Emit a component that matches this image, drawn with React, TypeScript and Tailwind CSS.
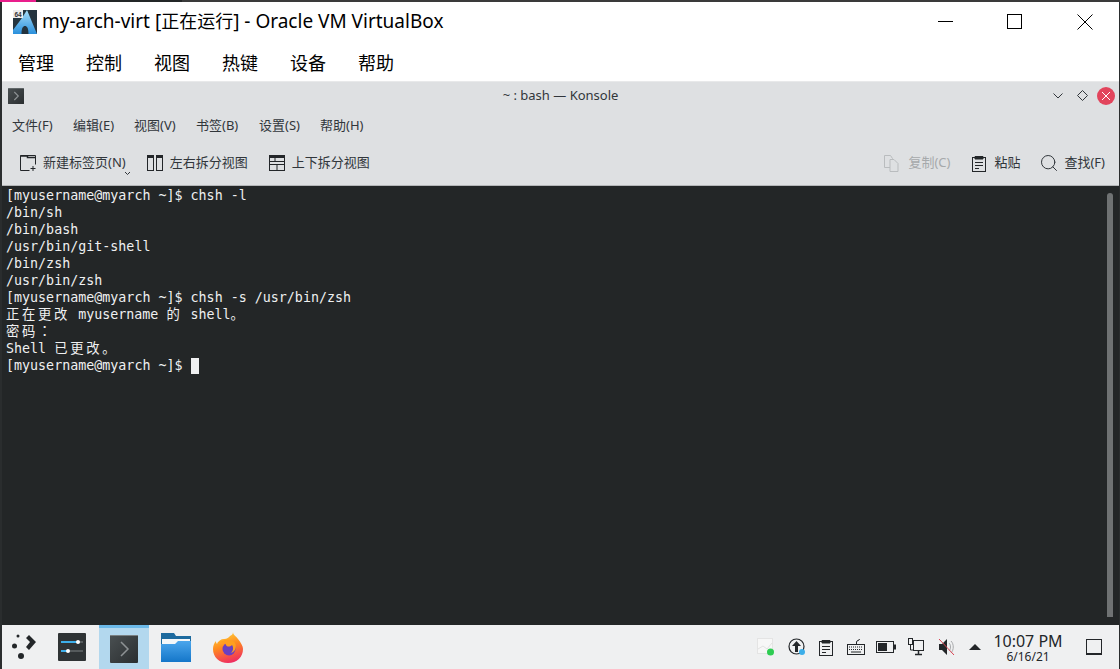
import { Search } from 'lucide-react'

const uiFont = '"Noto Sans", "Noto Sans CJK SC", sans-serif'

function Cn({ children }: { children: string }) {
  return <span className="font-['Noto_Sans_CJK_SC',sans-serif] leading-[0px] tracking-[2.7px]">{children}</span>
}

function TermLine({ children }: { children: React.ReactNode }) {
  return <div className="h-[17px] leading-[17px] whitespace-pre">{children}</div>
}

function ArchIcon() {
  return (
    <svg width="24" height="24" viewBox="0 0 24 24" className="shrink-0">
      <defs>
        <linearGradient id="arch" x1="0" y1="0" x2="0" y2="1">
          <stop offset="0" stopColor="#a8defa" />
          <stop offset="1" stopColor="#2a90dc" />
        </linearGradient>
      </defs>
      <rect width="24" height="24" fill="#24343f" />
      <path d="M14 0 L24 24 L15.5 24 C15.5 18 14 16 12 16 C10 16 8.5 18 8.5 24 L0 24 L0 20 L9 8 Z" fill="url(#arch)" />
      <rect width="10" height="8" fill="#ececec" />
      <text x="1.5" y="6.5" fontSize="6.5" fontWeight="700" fill="#333" fontFamily="Liberation Sans">64</text>
    </svg>
  )
}

function NewTabIcon() {
  return (
    <svg width="16" height="16" viewBox="0 0 16 16" fill="none" stroke="#232629" className="shrink-0">
      <path d="M.5 .5h15v9M.5 .5v15h9" />
      <path d="M.5 1h7v1.5h8" strokeWidth="1.5" />
      <path d="M13 11v5M10.5 13.5h5" />
    </svg>
  )
}

function SplitVIcon() {
  return (
    <svg width="16" height="16" viewBox="0 0 16 16" fill="none" stroke="#232629" className="shrink-0">
      <rect x=".5" y=".5" width="6" height="15" />
      <rect x="9.5" y=".5" width="6" height="15" />
      <path d="M0 1.5h7M9 1.5h7" strokeWidth="3" />
    </svg>
  )
}

function SplitHIcon() {
  return (
    <svg width="16" height="16" viewBox="0 0 16 16" fill="none" stroke="#232629" className="shrink-0">
      <rect x=".5" y=".5" width="15" height="15" />
      <path d="M0 1.5h16" strokeWidth="3" />
      <path d="M0 6.5h16M0 9.5h16M8 9.5v6M6 3v3.5" />
    </svg>
  )
}

function CopyIcon() {
  return (
    <svg width="15" height="17" viewBox="0 0 15 17" fill="none" stroke="#b9bcbe">
      <path d="M.5 .5h6l2 3v9h-8z" />
      <path d="M6 4.5h4l4 4v8H6z" fill="#dee0e2" />
    </svg>
  )
}

function PasteIcon() {
  return (
    <svg width="14" height="17" viewBox="0 0 14 17" fill="none" stroke="#232629">
      <rect x=".5" y="2.5" width="13" height="14" />
      <path d="M3 4V1.5h8V4z" fill="#232629" />
      <path d="M3 7.5h8M3 10.5h8M3 13.5h4" />
    </svg>
  )
}

function TerminalGlyph({ size, chevron }: { size: number; chevron: number }) {
  return (
    <svg width={size} height={size} viewBox="0 0 28 28">
      <defs>
        <linearGradient id={`term${size}`} x1="0" y1="0" x2="1" y2="1">
          <stop offset="0" stopColor="#4a5052" />
          <stop offset="1" stopColor="#2a2e30" />
        </linearGradient>
      </defs>
      <rect width="28" height="28" rx="1" fill={`url(#term${size})`} />
      <rect width="28" height="1" fill="#7a8082" />
      <path d="M11 7l7 7-7 7" fill="none" stroke="#8d9294" strokeWidth={chevron} />
    </svg>
  )
}

function TrayIcons() {
  return (
    <div className="flex items-center">
      {/* network monitor */}
      <svg width="18" height="18" viewBox="0 0 18 18" className="mr-[13px] ml-[7px]">
        <rect x=".5" y=".5" width="15" height="15" fill="#f7f7f7" stroke="#e4e4e4" />
        <path d="M1 11l5-3 4 3 5-6" fill="none" stroke="#e2e2e2" />
        <circle cx="13.5" cy="14" r="3.5" fill="#2ecc52" />
      </svg>
      {/* updates */}
      <svg width="18" height="18" viewBox="0 0 18 18" className="mr-[13px]">
        <circle cx="8.5" cy="8.5" r="7.5" fill="none" stroke="#232629" strokeWidth="1.2" />
        <path d="M8.5 3l4.5 5h-3v6h-3V8H4z" fill="#232629" />
        <circle cx="14" cy="14" r="3" fill="#3daee9" />
      </svg>
      <PasteIcon />
      {/* keyboard */}
      <svg width="18" height="16" viewBox="0 0 18 16" fill="none" stroke="#232629" className="mr-[11px] ml-[14px]">
        <path d="M9.5 5V3c0-2 3-1 3-3" />
        <rect x=".5" y="5.5" width="17" height="10" />
        <path d="M2 8h14M2 10.5h14" strokeDasharray="1 1" />
        <path d="M4 13h10" />
      </svg>
      {/* battery */}
      <svg width="20" height="12" viewBox="0 0 20 12" className="mr-[12px]">
        <rect x=".5" y=".5" width="17" height="11" fill="none" stroke="#232629" />
        <rect x="2" y="2" width="9" height="8" fill="#232629" />
        <rect x="18" y="3.5" width="2" height="5" fill="#232629" />
      </svg>
      {/* network */}
      <svg width="16" height="18" viewBox="0 0 16 18" fill="none" stroke="#232629" className="mr-[14px]">
        <rect x=".5" y=".5" width="4" height="6" />
        <path d="M2.5 6.5V12h3" />
        <rect x="5.5" y="2.5" width="10" height="10" />
        <path d="M10.5 13v3M7 16.5h7" strokeWidth="1.5" />
      </svg>
      {/* volume muted */}
      <svg width="17" height="18" viewBox="0 0 17 18" fill="none" className="mr-[14px]">
        <path d="M1 6h3l5-5v16l-5-5H1z" fill="#232629" />
        <path d="M11 5c2 2 2 6 0 8M13 3c3 3 3 9 0 12" stroke="#a8aaac" />
        <path d="M1 1l15 16" stroke="#da4453" />
      </svg>
      <span className="mr-[5px] h-0 w-0 border-x-[6px] border-b-[6px] border-x-transparent border-b-[#232629]" />
    </div>
  )
}

export default function App() {
  return (
    <div className="flex h-[669px] w-[1120px] flex-col overflow-hidden bg-white" style={{ fontFamily: uiFont }}>
      <div className="flex h-[2px] shrink-0">
        <div className="w-[36px] bg-[#e91e8c]" />
        <div className="w-[146px] bg-[#232627]" />
        <div className="flex-1 bg-[#3a3a3a]" />
      </div>

      <div className="flex min-h-0 flex-1 bg-[#2a2d2e]">
        <div className="w-[2px] shrink-0" />
        <div className="flex min-w-0 flex-1 flex-col">
          {/* VirtualBox title bar */}
          <header className="flex h-[39px] shrink-0 items-center bg-white pl-[11px] text-black">
            <ArchIcon />
            <span className="ml-[5px] text-[19px] whitespace-pre">
              my-arch-virt [<span className="text-[18px]">正在运行</span>] - Oracle VM VirtualBox
            </span>
            <div className="ml-auto flex items-center pr-[26px]">
              <div className="h-[1px] w-[15px] bg-black" />
              <div className="ml-[54px] h-[15px] w-[15px] border border-black" />
              <svg width="16" height="16" viewBox="0 0 16 16" className="ml-[55px]" stroke="#000" fill="none">
                <path d="M.5 .5l15 15M15.5 .5l-15 15" />
              </svg>
            </div>
          </header>

          {/* VirtualBox menu */}
          <nav className="flex h-[40px] shrink-0 items-start gap-[32px] bg-white pt-[9px] pl-[16px] text-[18px] leading-[26px] text-black">
            <span>管理</span>
            <span>控制</span>
            <span>视图</span>
            <span>热键</span>
            <span>设备</span>
            <span>帮助</span>
          </nav>

          {/* Konsole window */}
          <div className="flex h-[28px] shrink-0 items-center border-t border-[#e8e9ea] bg-[#dee0e2] pr-[4px] pl-[6px]">
            <TerminalGlyph size={16} chevron={2} />
            <span className="flex-1 pl-[44px] text-center text-[13px] text-[#31363b]">~ : bash — Konsole</span>
            <svg width="10" height="6" viewBox="0 0 10 6" fill="none" stroke="#31363b" className="mr-[14px]">
              <path d="M.5 .5l4.5 4.5 4.5-4.5" />
            </svg>
            <svg width="11" height="11" viewBox="0 0 11 11" fill="none" stroke="#31363b" className="mr-[9px]">
              <path d="M5.5 .5l5 5-5 5-5-5z" />
            </svg>
            <div className="flex h-[18px] w-[18px] items-center justify-center rounded-full bg-[#e2445c]">
              <svg width="10" height="10" viewBox="0 0 10 10" stroke="#fff" fill="none">
                <path d="M1 1l8 8M9 1l-8 8" />
              </svg>
            </div>
          </div>

          <div className="flex h-[32px] shrink-0 items-center bg-[#dee0e2] pt-[1px] pl-[10px] text-[13px] text-[#31363b]">
            <span className="w-[61px]">文件(F)</span>
            <span className="w-[61px]">编辑(E)</span>
            <span className="w-[62px]">视图(V)</span>
            <span className="w-[63px]">书签(B)</span>
            <span className="w-[61px]">设置(S)</span>
            <span className="w-[60px]">帮助(H)</span>
          </div>

          <div className="flex h-[45px] shrink-0 items-center border-b border-[#b4b6b8] bg-[#dee0e2] pr-[14px] pl-[18px] text-[13px] text-[#31363b]">
            <NewTabIcon />
            <span className="ml-[7px]">新建标签页(N)</span>
            <svg width="7" height="5" viewBox="0 0 7 5" fill="none" stroke="#31363b" className="mt-[21px] ml-[-2px]">
              <path d="M1 1l2.5 2.5L6 1" />
            </svg>
            <div className="ml-[16px]">
              <SplitVIcon />
            </div>
            <span className="ml-[7px]">左右拆分视图</span>
            <div className="ml-[21px]">
              <SplitHIcon />
            </div>
            <span className="ml-[7px]">上下拆分视图</span>
            <div className="ml-auto flex items-center">
              <CopyIcon />
              <span className="ml-[9px] text-[#a6a9ab]">复制(C)</span>
              <div className="ml-[22px] flex">
                <PasteIcon />
              </div>
              <span className="ml-[8px]">粘贴</span>
              <Search size={20} strokeWidth={1.2} className="ml-[19px]" />
              <span className="ml-[5px]">查找(F)</span>
            </div>
          </div>

          {/* terminal */}
          <main className="flex min-h-0 flex-1 bg-[#232627] pt-[1px] pl-[4px] font-['DejaVu_Sans_Mono',monospace] text-[13.33px] text-[#eff0f1]">
            <div className="flex-1">
              <TermLine>[myusername@myarch ~]$ chsh -l</TermLine>
              <TermLine>/bin/sh</TermLine>
              <TermLine>/bin/bash</TermLine>
              <TermLine>/usr/bin/git-shell</TermLine>
              <TermLine>/bin/zsh</TermLine>
              <TermLine>/usr/bin/zsh</TermLine>
              <TermLine>[myusername@myarch ~]$ chsh -s /usr/bin/zsh</TermLine>
              <TermLine>
                <Cn>正在更改</Cn> myusername <Cn>的</Cn> shell<Cn>。</Cn>
              </TermLine>
              <TermLine>
                <span className="font-['Noto_Sans_CJK_TC',sans-serif] leading-[0px] tracking-[2.7px]">密码：</span>
              </TermLine>
              <TermLine>
                Shell <Cn>已更改。</Cn>
              </TermLine>
              <TermLine>
                [myusername@myarch ~]$ <span className="mt-[1px] inline-block h-[16px] w-[8px] bg-[#eff0f1] align-top" />
              </TermLine>
            </div>
            <div className="mt-[6px] mr-[6px] mb-[8px] w-[6px] rounded-t-full rounded-b-sm bg-[#6f7273]" />
          </main>

          {/* panel */}
          <footer className="flex h-[44px] shrink-0 items-center bg-[#eff0f1] text-[#232629]">
            <svg width="28" height="28" viewBox="0 0 28 28" className="ml-[8px]" fill="#232629">
              <circle cx="8" cy="3" r="1.5" />
              <circle cx="4.5" cy="13" r="2.5" />
              <circle cx="11" cy="23" r="3" />
              <path d="M19 2l7 7-7 8-3-3 4-5-4-4z" />
            </svg>
            <div className="ml-[20px]">
              <svg width="28" height="28" viewBox="0 0 28 28">
                <rect width="28" height="28" rx="1" fill="#2f3335" />
                <path d="M3 9h17M3 18h7" stroke="#3daee9" strokeWidth="2" />
                <path d="M20 9h5M10 18h15" stroke="#555a5c" strokeWidth="2" />
                <circle cx="20" cy="9" r="2" fill="#fff" />
                <circle cx="10" cy="18" r="2" fill="#fff" />
              </svg>
            </div>
            <div className="relative ml-[13px] flex h-full w-[50px] items-center justify-center bg-[#b3d8ee]">
              <div className="absolute top-0 right-0 left-0 h-[3px] bg-[#6cb9e8]" />
              <div className="mt-[3px]">
                <TerminalGlyph size={28} chevron={1.5} />
              </div>
            </div>
            <svg width="30" height="29" viewBox="0 0 30 29" className="ml-[12px]">
              <defs>
                <linearGradient id="folder" x1="0" y1="0" x2="0" y2="1">
                  <stop offset="0" stopColor="#4ba6ec" />
                  <stop offset="1" stopColor="#1476c9" />
                </linearGradient>
              </defs>
              <path d="M0 0h13l2 3h15v26H0z" fill="#1d6a9e" />
              <rect x="1" y="6" width="28" height="5" fill="#f4f7f9" />
              <path d="M0 11h14l3-3h13v21H0z" fill="url(#folder)" />
            </svg>
            <svg width="30" height="31" viewBox="0 0 30 31" className="ml-[22px]">
              <defs>
                <linearGradient id="fx" x1="0.3" y1="0" x2="0.6" y2="1">
                  <stop offset="0" stopColor="#ffd43a" />
                  <stop offset=".45" stopColor="#ff8a1f" />
                  <stop offset="1" stopColor="#ee2a63" />
                </linearGradient>
              </defs>
              <path d="M20 0c0 3 3 4 5 7 3 4 5 7 5 10 0 8-6 14-15 14S0 25 0 17c0-3 1-6 3-8 0 1 0 2 1 3 1-3 4-5 7-5 3 0 5-2 6-3 2-1 3-2 3-4z" fill="url(#fx)" />
              <circle cx="16" cy="17" r="6.5" fill="#6a3fc0" />
              <path d="M3 12c4-2 9-2 10 1 1 2 4 2 6 0 2 3 1 6-1 8 4-1 6-6 4-10-3-4-9-4-12-2-3 1-5 1-7 3z" fill="#ff9f1f" />
            </svg>
            <div className="ml-auto flex items-center">
              <TrayIcons />
              <div className="flex w-[84px] flex-col items-center">
                <span className="text-[16px] leading-[18px]">10:07 PM</span>
                <span className="text-[12px] leading-[13px]">6/16/21</span>
              </div>
              <div className="mr-[17px] ml-[16px] h-[16px] w-[16px] border border-[#232629] shadow-[inset_0_-1px_0_#232629]" />
            </div>
          </footer>
        </div>
        <div className="w-[1px] shrink-0" />
      </div>
    </div>
  )
}
